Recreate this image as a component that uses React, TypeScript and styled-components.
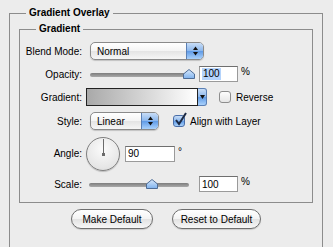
import styled, { createGlobalStyle } from "styled-components";

const GlobalStyle = createGlobalStyle`
  body {
    margin: 0;
    background: #ececec;
    font-family: "Liberation Sans", Arial, sans-serif;
    font-size: 10px;
    color: #000;
  }
`;

const Panel = styled.fieldset`
  margin: 6px 0 0 9px;
  width: 314px;
  height: 241px;
  box-sizing: border-box;
  border: 1px solid #8c8c8c;
  border-bottom: none;
  padding: 2px 9px 0 9px;
`;

const Legend = styled.legend<{ $offset: number }>`
  margin-left: ${(p) => p.$offset}px;
  padding: 0 3px;
  font-weight: bold;
  font-size: 10px;
  line-height: 14px;
`;

const Group = styled.fieldset`
  margin: 0;
  width: 294px;
  box-sizing: border-box;
  border: 1px solid #8c8c8c;
  padding: 6px 0 11px 0;
  display: flex;
  flex-direction: column;
  gap: 6px;
`;

const Row = styled.div<{ $h: number }>`
  display: flex;
  align-items: center;
  height: ${(p) => p.$h}px;
`;

const Label = styled.div`
  width: 62px;
  margin-right: 4px;
  text-align: right;
  white-space: nowrap;
`;

const PopUp = styled.div<{ $w: number }>`
  margin-left: 4px;
  width: ${(p) => p.$w}px;
  height: 18px;
  box-sizing: border-box;
  border: 1px solid #8a8a8a;
  border-radius: 5px;
  background: linear-gradient(#ffffff, #f4f4f4 50%, #e4e4e4 51%, #f6f6f6);
  box-shadow: 0 1px 1px rgba(0, 0, 0, 0.18);
  display: flex;
  align-items: center;
  overflow: hidden;
`;

const PopUpText = styled.span`
  flex: 1;
  padding-left: 6px;
`;

const PopUpArrows = styled.div`
  width: 16px;
  height: 100%;
  border-left: 1px solid #5a7fb4;
  background: linear-gradient(#c8ddf7, #8ab6ec 50%, #5f9ae6 51%, #a9d1fb);
  display: flex;
  align-items: center;
  justify-content: center;
`;

const Slider = styled.div<{ $start: number }>`
  position: relative;
  margin-left: ${(p) => p.$start}px;
  width: 100px;
  height: 14px;
`;

const Track = styled.div`
  position: absolute;
  left: 0;
  right: 0;
  top: 6px;
  height: 4px;
  border-radius: 2px;
  background: linear-gradient(#7d7d7d, #a9a9a9);
`;

const Thumb = styled.svg`
  position: absolute;
  top: 2px;
  margin-left: -6px;
`;

const NumBlock = styled.div<{ $ml: number }>`
  margin-left: ${(p) => p.$ml}px;
  display: flex;
  align-items: flex-start;
`;

const NumField = styled.div<{ $w: number }>`
  width: ${(p) => p.$w}px;
  height: 16px;
  box-sizing: border-box;
  border: 1px solid #9a9a9a;
  border-top-color: #6f6f6f;
  background: #fff;
  padding: 1px 2px;
  display: flex;
  align-items: center;
`;

const Selected = styled.span`
  background: #b4d3fb;
  padding: 0 1px;
  line-height: 12px;
`;

const Unit = styled.span`
  margin-left: 3px;
  line-height: 12px;
`;

const GradientBox = styled.div`
  display: flex;
  height: 18px;
`;

const GradientSwatch = styled.div`
  width: 112px;
  box-sizing: border-box;
  border: 1px solid #222;
  background: linear-gradient(90deg, #a9a9a9, #fff);
`;

const SwatchArrow = styled.div`
  width: 8px;
  border: 1px solid #5a7fb4;
  border-left: none;
  border-radius: 0 3px 3px 0;
  background: linear-gradient(#c8ddf7, #8ab6ec 50%, #5f9ae6 51%, #a9d1fb);
  display: flex;
  align-items: center;
  justify-content: center;
`;

const Check = styled.label<{ $ml: number }>`
  margin-left: ${(p) => p.$ml}px;
  display: flex;
  align-items: center;
  gap: 5px;
`;

const Box = styled.span<{ $on?: boolean }>`
  width: 12px;
  height: 12px;
  box-sizing: border-box;
  border: 1px solid ${(p) => (p.$on ? "#4a6ea8" : "#8d8d8d")};
  border-radius: 3px;
  background: ${(p) =>
    p.$on
      ? "linear-gradient(#c8ddf7, #8ab6ec 50%, #5f9ae6 51%, #a9d1fb)"
      : "linear-gradient(#fdfdfd, #e6e6e6)"};
  position: relative;
`;

const Tick = styled.svg`
  position: absolute;
  left: 0px;
  top: -4px;
`;

const Dial = styled.div`
  position: relative;
  width: 34px;
  height: 34px;
  box-sizing: border-box;
  border-radius: 50%;
  border: 1px solid #7f7f7f;
  background: radial-gradient(circle at 50% 35%, #fbfbfb, #e6e6e6 70%, #d2d2d2);
  box-shadow: 0 1px 1px rgba(0, 0, 0, 0.2);
`;

const DialHand = styled.div`
  position: absolute;
  left: 15.5px;
  top: 1px;
  width: 1px;
  height: 15px;
  background: #6b6b6b;
`;

const DialDot = styled.div`
  position: absolute;
  left: 14.5px;
  top: 15px;
  width: 3px;
  height: 3px;
  background: #6b6b6b;
`;

const Buttons = styled.div`
  display: flex;
  justify-content: center;
  gap: 19px;
  margin-top: 6px;
`;

const Button = styled.button<{ $w: number }>`
  width: ${(p) => p.$w}px;
  height: 20px;
  border: 1px solid #6e6e6e;
  border-radius: 10px;
  background: linear-gradient(#ffffff, #f3f3f3 50%, #e2e2e2 51%, #f7f7f7);
  box-shadow: 0 1px 1px rgba(0, 0, 0, 0.15);
  font-family: "Liberation Sans", Arial, sans-serif;
  font-size: 10px;
  color: #000;
  padding: 0;
`;

const Arrows = () => (
  <svg width="7" height="10" viewBox="0 0 7 10">
    <path d="M3.5 0.5 L6 4 L1 4 Z" fill="#111" />
    <path d="M3.5 9.5 L6 6 L1 6 Z" fill="#111" />
  </svg>
);

const SliderControl = ({ pos, start, id }: { pos: number; start: number; id: string }) => (
  <Slider $start={start}>
    <Track />
    <Thumb width="12" height="10" style={{ left: `${pos}%` }} viewBox="0 0 12 10">
      <defs>
        <linearGradient id={id} x1="0" y1="0" x2="0" y2="1">
          <stop offset="0" stopColor="#d9e9fb" />
          <stop offset="1" stopColor="#7fb2ee" />
        </linearGradient>
      </defs>
      <path
        d="M6 0.5 L11.5 5 L11.5 9.5 L0.5 9.5 L0.5 5 Z"
        fill={`url(#${id})`}
        stroke="#4f6d96"
        strokeWidth="1"
      />
    </Thumb>
  </Slider>
);

export default function App() {
  return (
    <>
      <GlobalStyle />
      <Panel>
        <Legend $offset={7}>Gradient Overlay</Legend>
        <Group>
          <Legend $offset={16}>Gradient</Legend>
          <Row $h={18}>
            <Label>Blend Mode:</Label>
            <PopUp $w={114}>
              <PopUpText>Normal</PopUpText>
              <PopUpArrows>
                <Arrows />
              </PopUpArrows>
            </PopUp>
          </Row>
          <Row $h={16}>
            <Label>Opacity:</Label>
            <SliderControl pos={99} start={4} id="op" />
            <NumBlock $ml={9}>
              <NumField $w={39}>
                <Selected>100</Selected>
              </NumField>
              <Unit>%</Unit>
            </NumBlock>
          </Row>
          <Row $h={18}>
            <Label>Gradient:</Label>
            <GradientBox>
              <GradientSwatch />
              <SwatchArrow>
                <svg width="5" height="4" viewBox="0 0 5 4">
                  <path d="M0 0 L5 0 L2.5 4 Z" fill="#111" />
                </svg>
              </SwatchArrow>
            </GradientBox>
            <Check $ml={12}>
              <Box />
              Reverse
            </Check>
          </Row>
          <Row $h={18}>
            <Label>Style:</Label>
            <PopUp $w={69}>
              <PopUpText>Linear</PopUpText>
              <PopUpArrows>
                <Arrows />
              </PopUpArrows>
            </PopUp>
            <Check $ml={14}>
              <Box $on>
                <Tick width="14" height="15" viewBox="0 0 14 15">
                  <path d="M2 8 L5 12 L12 1" fill="none" stroke="#1c2a44" strokeWidth="2" />
                </Tick>
              </Box>
              Align with Layer
            </Check>
          </Row>
          <Row $h={35}>
            <Label>Angle:</Label>
            <Dial>
              <DialHand />
              <DialDot />
            </Dial>
            <NumBlock $ml={5}>
              <NumField $w={50}>90</NumField>
              <Unit>°</Unit>
            </NumBlock>
          </Row>
          <Row $h={14}>
            <Label>Scale:</Label>
            <SliderControl pos={63} start={3} id="sc" />
            <NumBlock $ml={10}>
              <NumField $w={39}>100</NumField>
              <Unit>%</Unit>
            </NumBlock>
          </Row>
        </Group>
        <Buttons>
          <Button $w={82}>Make Default</Button>
          <Button $w={89}>Reset to Default</Button>
        </Buttons>
      </Panel>
    </>
  );
}
